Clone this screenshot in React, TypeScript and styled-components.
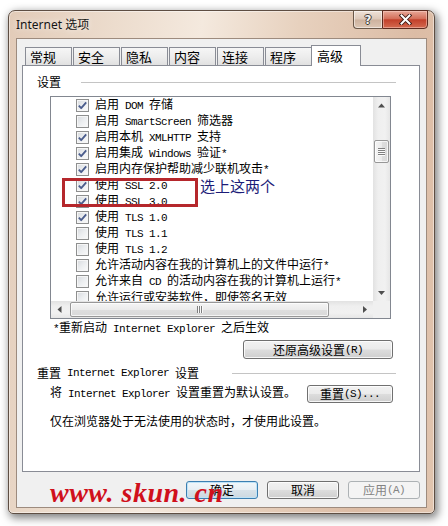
import React from 'react';
import styled, { createGlobalStyle } from 'styled-components';

const GlobalStyle = createGlobalStyle`
  html, body { margin: 0; padding: 0; background: #ffffff; }
  #root { width: 448px; height: 526px; }
`;

const CJK = `"Noto Sans CJK SC", "Noto Sans", sans-serif`;

const Page = styled.div`
  width: 448px;
  height: 526px;
  box-sizing: border-box;
  padding: 10px 0 0 8px;
  overflow: hidden;
  background: #fff;
  font-family: ${CJK};
  color: #000;
`;

const Window = styled.div`
  position: relative;
  width: 427px;
  height: 504px;
  box-sizing: border-box;
  display: flex;
  flex-direction: column;
  border: 1px solid #5e4e43;
  border-radius: 7px 7px 5px 5px;
  background: linear-gradient(97deg, #e2cbb8 0%, #ecdccd 22%, #f4e9de 40%, #e7d1be 60%, #dcbca5 84%, #e1c5af 100%);
  box-shadow: inset 0 0 0 1px rgba(255, 255, 255, 0.45), 2px 3px 9px 1px rgba(0, 0, 0, 0.5);
`;

const TitleBar = styled.div`
  height: 27px;
  flex: none;
  display: flex;
  align-items: flex-start;
  justify-content: space-between;
  padding: 0 6px 0 7px;
`;

const Title = styled.div`
  align-self: center;
  font-family: "Noto Sans", "Noto Sans CJK SC", sans-serif;
  font-size: 12px;
  line-height: 14px;
  color: #151515;
  text-shadow: 0 0 6px rgba(255, 255, 255, 0.9);
`;

const Caption = styled.div`
  display: flex;
  margin-top: -1px;
`;

const HelpButton = styled.div`
  width: 29px;
  height: 19px;
  box-sizing: border-box;
  border: 1px solid #6a5849;
  border-right: none;
  border-radius: 0 0 0 4px;
  background: linear-gradient(#efe2d8 0%, #ddc8b8 48%, #cdb29e 52%, #dcc6b4 100%);
  box-shadow: inset 0 0 0 1px rgba(255, 255, 255, 0.5);
  display: flex;
  align-items: center;
  justify-content: center;
  font-family: "DejaVu Sans", sans-serif;
  font-weight: bold;
  font-size: 12px;
  line-height: 12px;
  color: #f2f2f2;
  text-shadow: -1px 0 #433a33, 1px 0 #433a33, 0 -1px #433a33, 0 1px #433a33;
`;

const CloseButton = styled.div`
  width: 46px;
  height: 19px;
  box-sizing: border-box;
  border: 1px solid #5c2a1e;
  border-radius: 0 0 4px 0;
  background: linear-gradient(#e8a898 0%, #d46f5a 45%, #c2402a 52%, #d46a50 100%);
  box-shadow: inset 0 0 0 1px rgba(255, 220, 210, 0.45);
  display: flex;
  align-items: center;
  justify-content: center;
`;

const FrameBody = styled.div`
  flex: 1;
  min-height: 0;
  display: flex;
  padding: 0 7px 5px 7px;
`;

const Client = styled.div`
  flex: 1;
  display: flex;
  flex-direction: column;
  background: #f0f0f0;
  border: 1px solid #9d8b7e;
  padding: 6px 6px 0 5px;
`;

const TabStrip = styled.div`
  height: 20px;
  flex: none;
  display: flex;
  align-items: flex-end;
  gap: 1px;
  padding-left: 3px;
`;

const Tab = styled.div<{ $active?: boolean }>`
  box-sizing: border-box;
  height: ${(p) => (p.$active ? 21 : 18)}px;
  width: ${(p) => (p.$active ? 50 : 47)}px;
  margin: 0 0 ${(p) => (p.$active ? '-1px' : '0')} ${(p) => (p.$active ? '-2px' : '0')};
  position: relative;
  z-index: ${(p) => (p.$active ? 1 : 0)};
  border: 1px solid #898c95;
  border-bottom: none;
  background: ${(p) => (p.$active ? '#ffffff' : 'linear-gradient(#f6f6f6, #ededed 50%, #e1e1e1 100%)')};
  padding: ${(p) => (p.$active ? '0 0 2px 5px' : '0 0 0 4px')};
  display: flex;
  align-items: center;
  font-size: 13px;
  line-height: 15px;
  color: #000;
`;

const Panel = styled.div`
  height: 407px;
  flex: none;
  box-sizing: border-box;
  border: 1px solid #898c95;
  background: #fff;
  display: flex;
  flex-direction: column;
  padding: 9px 23px 0 14px;
`;

const GroupHeader = styled.div<{ $top?: number }>`
  display: flex;
  align-items: center;
  margin-top: ${(p) => p.$top ?? 0}px;
  font-size: 12px;
  line-height: 14px;
  white-space: nowrap;
`;

const GroupLine = styled.div<{ $gap: number }>`
  flex: 1;
  height: 1px;
  margin-left: ${(p) => p.$gap}px;
  background: #c4c4c4;
`;

const ListBox = styled.div`
  margin: 7px 0 0 13px;
  width: 341px;
  height: 223px;
  flex: none;
  box-sizing: border-box;
  border: 1px solid #828790;
  display: grid;
  grid-template-columns: 1fr 17px;
  grid-template-rows: 1fr 17px;
`;

const ListContent = styled.div`
  position: relative;
  overflow: hidden;
  background: #fff;
`;

const Row = styled.div`
  height: 16px;
  display: flex;
  align-items: center;
  gap: 6px;
  padding-left: 25px;
  font-size: 12px;
  line-height: 16px;
  white-space: nowrap;
`;

const CheckBox = styled.span`
  width: 13px;
  height: 13px;
  flex: none;
  box-sizing: border-box;
  border: 1px solid #8e8f8f;
  background: linear-gradient(135deg, #d6d9dd 0%, #eceef0 50%, #fbfbfb 100%);
  box-shadow: inset 0 0 0 1px #f6f6f6;
  display: flex;
  align-items: center;
  justify-content: center;
`;

const Latin = styled.span`
  font-family: "Liberation Mono", monospace;
  font-size: 11px;
  letter-spacing: -0.6px;
  white-space: pre;
`;

const Highlight = styled.div`
  position: absolute;
  left: 11px;
  top: 81px;
  width: 136px;
  height: 29px;
  box-sizing: border-box;
  border: 3px solid #b5272c;
  pointer-events: none;
`;

const Annotation = styled.div`
  position: absolute;
  left: 149px;
  top: 80px;
  font-size: 15px;
  line-height: 18px;
  color: #1c1c78;
  white-space: nowrap;
`;

const VScroll = styled.div`
  display: flex;
  flex-direction: column;
  background: linear-gradient(90deg, #e2e2e2, #efefef 30%, #f1f1f1 70%, #e6e6e6);
`;

const HScroll = styled.div`
  display: flex;
  background: linear-gradient(#e2e2e2, #efefef 30%, #f1f1f1 70%, #e6e6e6);
`;

const ScrollCorner = styled.div`
  background: #f0f0f0;
`;

const ArrowCell = styled.div`
  width: 17px;
  height: 17px;
  flex: none;
  display: flex;
  align-items: center;
  justify-content: center;
`;

const VTrack = styled.div`
  flex: 1;
  padding: 26px 1px 0 1px;
`;

const HTrack = styled.div`
  flex: 1;
  padding: 1px 0 0 2px;
`;

const VThumb = styled.div`
  width: 15px;
  height: 23px;
  box-sizing: border-box;
  border: 1px solid #979797;
  border-radius: 2px;
  background: linear-gradient(90deg, #f5f5f5, #ebebeb 50%, #dedede 51%, #d9d9d9);
  box-shadow: inset 0 0 0 1px rgba(255, 255, 255, 0.7);
  display: flex;
  flex-direction: column;
  align-items: center;
  justify-content: center;
  gap: 1px;
`;

const HThumb = styled.div`
  width: 259px;
  height: 15px;
  box-sizing: border-box;
  border: 1px solid #979797;
  border-radius: 2px;
  background: linear-gradient(#f5f5f5, #ebebeb 50%, #dedede 51%, #d9d9d9);
  box-shadow: inset 0 0 0 1px rgba(255, 255, 255, 0.7);
  display: flex;
  align-items: center;
  justify-content: center;
  gap: 1px;
`;

const GripH = styled.span`
  width: 7px;
  height: 1px;
  background: #7f7f7f;
  box-shadow: 0 1px 0 #fafafa;
`;

const GripV = styled.span`
  width: 1px;
  height: 7px;
  background: #7f7f7f;
  box-shadow: 1px 0 0 #fafafa;
`;

const Note = styled.div<{ $top: number; $left: number }>`
  margin: ${(p) => p.$top}px 0 0 ${(p) => p.$left}px;
  font-size: 12px;
  line-height: 14px;
  white-space: nowrap;
`;

const ButtonRow = styled.div`
  display: flex;
  align-items: flex-start;
  justify-content: space-between;
  margin: 5px 3px 0 13px;
`;

const Button = styled.div<{ $w: number; $h: number; $kind?: 'default' | 'disabled' }>`
  width: ${(p) => p.$w}px;
  height: ${(p) => p.$h}px;
  flex: none;
  box-sizing: border-box;
  border-radius: 3px;
  border: 1px solid ${(p) => (p.$kind === 'default' ? '#3c7fb1' : p.$kind === 'disabled' ? '#adb2b5' : '#707070')};
  background: ${(p) =>
    p.$kind === 'default'
      ? 'linear-gradient(#f2f7fa 0%, #e8eff4 49%, #d8e2e9 51%, #ccd8e0 100%)'
      : p.$kind === 'disabled'
        ? '#f4f4f4'
        : 'linear-gradient(#f2f2f2 0%, #ebebeb 49%, #dddddd 51%, #cfcfcf 100%)'};
  box-shadow: ${(p) =>
    p.$kind === 'default'
      ? 'inset 0 0 0 1px #bfe3f7'
      : p.$kind === 'disabled'
        ? 'none'
        : 'inset 0 0 0 1px rgba(255, 255, 255, 0.8)'};
  color: ${(p) => (p.$kind === 'disabled' ? '#838383' : '#000')};
  display: flex;
  align-items: center;
  justify-content: center;
  font-size: 12px;
  line-height: 14px;
  white-space: nowrap;
`;

const RightButton = styled(Button)`
  align-self: flex-end;
  margin: 4px 3px 0 0;
`;

const BottomBar = styled.div`
  display: flex;
  justify-content: flex-end;
  gap: 9px;
  padding-top: 9px;
`;

const Watermark = styled.div`
  position: absolute;
  left: 41px;
  top: 467px;
  font-family: "Liberation Serif", serif;
  font-style: italic;
  font-weight: bold;
  font-size: 28px;
  line-height: 29px;
  letter-spacing: 0.5px;
  color: #d0101c;
  white-space: pre;
  pointer-events: none;
`;

const mixed = (s: string) =>
  s
    .split(/([\x20-\x7e]+)/)
    .filter(Boolean)
    .map((part, i) =>
      /^[\x20-\x7e]+$/.test(part) ? <Latin key={i}>{part}</Latin> : <React.Fragment key={i}>{part}</React.Fragment>
    );

const Arrow = ({ dir }: { dir: 'up' | 'down' | 'left' | 'right' }) => {
  const pts = {
    up: '0,4.5 3.5,0.5 7,4.5',
    down: '0,1 3.5,5 7,1',
    left: '4.5,0 0.5,3.5 4.5,7',
    right: '1,0 5,3.5 1,7',
  }[dir];
  const vertical = dir === 'up' || dir === 'down';
  return (
    <svg width={vertical ? 7 : 6} height={vertical ? 6 : 7} viewBox={vertical ? '0 0 7 6' : '0 0 6 7'}>
      <polygon points={pts} fill="#4f4f4f" />
    </svg>
  );
};

const Check = () => (
  <svg width="11" height="11" viewBox="0 0 11 11">
    <polyline points="1.8,5.6 4.2,8.2 9.2,2.4" fill="none" stroke="#4a5c8c" strokeWidth="1.8" strokeLinejoin="round" />
  </svg>
);

const CloseGlyph = () => (
  <svg width="13" height="11" viewBox="0 0 13 11">
    <path d="M2.5 1.5 L10.5 9.5 M10.5 1.5 L2.5 9.5" stroke="#3b1a14" strokeWidth="3.8" strokeLinecap="square" />
    <path d="M2.5 1.5 L10.5 9.5 M10.5 1.5 L2.5 9.5" stroke="#ffffff" strokeWidth="2" strokeLinecap="square" />
  </svg>
);

const tabs = ['常规', '安全', '隐私', '内容', '连接', '程序'];

const items: { t: string; c: boolean }[] = [
  { t: '启用 DOM 存储', c: true },
  { t: '启用 SmartScreen 筛选器', c: false },
  { t: '启用本机 XMLHTTP 支持', c: true },
  { t: '启用集成 Windows 验证*', c: true },
  { t: '启用内存保护帮助减少联机攻击*', c: true },
  { t: '使用 SSL 2.0', c: true },
  { t: '使用 SSL 3.0', c: true },
  { t: '使用 TLS 1.0', c: true },
  { t: '使用 TLS 1.1', c: false },
  { t: '使用 TLS 1.2', c: false },
  { t: '允许活动内容在我的计算机上的文件中运行*', c: false },
  { t: '允许来自 CD 的活动内容在我的计算机上运行*', c: false },
  { t: '允许运行或安装软件，即使签名无效', c: false },
];

export default function App() {
  return (
    <Page>
      <GlobalStyle />
      <Window>
        <TitleBar>
          <Title>Internet 选项</Title>
          <Caption>
            <HelpButton>?</HelpButton>
            <CloseButton>
              <CloseGlyph />
            </CloseButton>
          </Caption>
        </TitleBar>
        <FrameBody>
          <Client>
            <TabStrip>
              {tabs.map((t) => (
                <Tab key={t}>{t}</Tab>
              ))}
              <Tab $active>高级</Tab>
            </TabStrip>
            <Panel>
              <GroupHeader>
                设置
                <GroupLine $gap={20} />
              </GroupHeader>
              <ListBox>
                <ListContent>
                  {items.map((it) => (
                    <Row key={it.t}>
                      <CheckBox>{it.c && <Check />}</CheckBox>
                      <span>{mixed(it.t)}</span>
                    </Row>
                  ))}
                  <Highlight />
                  <Annotation>选上这两个</Annotation>
                </ListContent>
                <VScroll>
                  <ArrowCell>
                    <Arrow dir="up" />
                  </ArrowCell>
                  <VTrack>
                    <VThumb>
                      <GripH />
                      <GripH />
                      <GripH />
                      <GripH />
                    </VThumb>
                  </VTrack>
                  <ArrowCell>
                    <Arrow dir="down" />
                  </ArrowCell>
                </VScroll>
                <HScroll>
                  <ArrowCell>
                    <Arrow dir="left" />
                  </ArrowCell>
                  <HTrack>
                    <HThumb>
                      <GripV />
                      <GripV />
                      <GripV />
                    </HThumb>
                  </HTrack>
                  <ArrowCell>
                    <Arrow dir="right" />
                  </ArrowCell>
                </HScroll>
                <ScrollCorner />
              </ListBox>
              <Note $top={1} $left={16}>
                {mixed('*重新启动 Internet Explorer 之后生效')}
              </Note>
              <RightButton $w={150} $h={19}>
                {mixed('还原高级设置(R)')}
              </RightButton>
              <GroupHeader $top={7}>
                {mixed('重置 Internet Explorer 设置')}
                <GroupLine $gap={33} />
              </GroupHeader>
              <ButtonRow>
                <Note $top={0} $left={0}>
                  {mixed('将 Internet Explorer 设置重置为默认设置。')}
                </Note>
                <Button $w={86} $h={18}>
                  {mixed('重置(S)...')}
                </Button>
              </ButtonRow>
              <Note $top={11} $left={13}>
                仅在浏览器处于无法使用的状态时，才使用此设置。
              </Note>
            </Panel>
            <BottomBar>
              <Button $w={72} $h={18} $kind="default">
                确定
              </Button>
              <Button $w={72} $h={18}>
                取消
              </Button>
              <Button $w={72} $h={18} $kind="disabled">
                {mixed('应用(A)')}
              </Button>
            </BottomBar>
          </Client>
        </FrameBody>
        <Watermark>www. skun. cn</Watermark>
      </Window>
    </Page>
  );
}
